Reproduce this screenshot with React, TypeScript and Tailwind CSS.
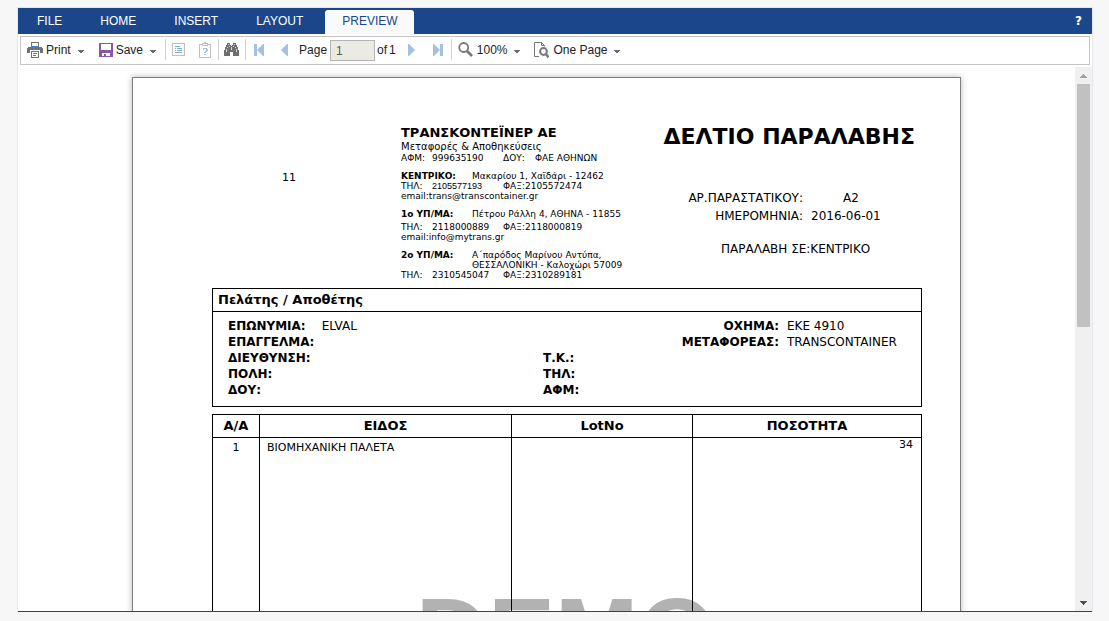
import React from 'react';

const tabs = ['FILE', 'HOME', 'INSERT', 'LAYOUT'];

const Caret = () => (
  <svg width="6" height="4" viewBox="0 0 6 4" shapeRendering="crispEdges" className="mt-1">
    <path d="M0 0h6v1h-1v1h-1v1h-2v-1h-1v-1h-1z" fill="#6d6d6d" />
  </svg>
);

const Separator = ({ className }: { className: string }) => <div className={`h-[21px] w-px bg-[#d0d0d0] ${className}`} />;

const PrintIcon = () => (
  <svg width="16" height="16" viewBox="0 0 16 16" shapeRendering="crispEdges">
    <path d="M4 0h8v5h-8z" fill="#727272" />
    <path d="M5 1h6v3h-6z" fill="#fff" />
    <path d="M1 5h14v1h1v5h-16v-5h1z" fill="#727272" />
    <path d="M4 4h8v1h-8z" fill="#4a7ebb" />
    <path d="M3 8h10v3h-10z" fill="#fff" />
    <path d="M4 9h8v7h-8z" fill="#727272" />
    <path d="M5 10h6v5h-6z" fill="#fff" />
    <path d="M6 11h4v1h-4zM6 13h3v1h-3z" fill="#4a7ebb" />
  </svg>
);

const SaveIcon = () => (
  <svg width="14" height="14" viewBox="0 0 14 14" shapeRendering="crispEdges">
    <path d="M0 0h14v14h-14z" fill="#8a56a8" />
    <path d="M2 1h10v6h-10zM3 10h8v3h-4v-2h-2v2h-2z" fill="#fff" />
  </svg>
);

const ParametersIcon = () => (
  <svg width="13" height="13" viewBox="0 0 13 13" shapeRendering="crispEdges">
    <path d="M.5 .5h12v12h-12z" fill="none" stroke="#c0c0c0" />
    <path d="M3 3h5v1h-5zM3 5h1v1h-1zM5 5h5v1h-5zM5 7h5v1h-5zM3 7h1v1h-1zM3 9h7v1h-7z" fill="#7fabd8" />
  </svg>
);

const ClipboardIcon = () => (
  <svg width="12" height="16" viewBox="0 0 12 16" shapeRendering="crispEdges">
    <path d="M.5 2.5h11v13h-11z" fill="none" stroke="#c0c0c0" />
    <path d="M5 0h2v1h2v3h-6v-3h2z" fill="#c0c0c0" />
    <path d="M4 2h4v1h-4z" fill="#fff" />
    <path d="M4 6h4v1h1v2h-1v1h-1v1h-2v-1h1v-1h1v-2h-2v1h-1zM5 12h2v1h-2z" fill="#a4c2e0" />
  </svg>
);

const FindIcon = () => (
  <svg width="15" height="13" viewBox="0 0 15 13" shapeRendering="crispEdges">
    <path d="M3 0h3v2h1v1h1v-1h1v-2h3v2h1v2h1v3h1v6h-6v-4h-3v4h-6v-6h1v-3h1v-2h1z" fill="#6f6f6f" />
    <path d="M4 1h1v1h-1zM10 1h1v1h-1zM7 4h1v3h-1zM3 4h1v1h-1zM2 6h1v3h-1zM5 3h1v1h-1zM9 3h1v1h-1zM12 6h1v3h-1zM11 4h1v1h-1z" fill="#d4d4d4" />
  </svg>
);

const ArrowIcon = ({ bar, flip }: { bar?: boolean; flip?: boolean }) => (
  <svg width={bar ? 10 : 7} height="12" viewBox={bar ? '0 0 10 12' : '3 0 7 12'} className={flip ? '-scale-x-100' : ''}>
    {bar && <path d="M0 0h3v12h-3z" fill="#a4c2e0" />}
    <path d="M10 0v12h-1l-6-6l6-6z" fill="#a4c2e0" />
  </svg>
);

const ZoomIcon = () => (
  <svg width="15" height="15" viewBox="0 0 15 15" fill="none" stroke="#777">
    <circle cx="5.7" cy="5.5" r="4.5" strokeWidth="1.8" />
    <path d="M9 9l5 5" strokeWidth="2.6" />
  </svg>
);

const PageViewIcon = () => (
  <svg width="15" height="16" viewBox="0 0 15 16" fill="none" stroke="#777">
    <path d="M5 14.5H.5V.5h7l3 3v1M7.5 .5v3h3" />
    <circle cx="9.5" cy="9.5" r="3.4" strokeWidth="2" />
    <path d="M11.8 12l2.8 3.4" strokeWidth="2.4" />
  </svg>
);

const Ribbon = () => {
  return (
    <nav className="flex h-[26px] shrink-0 items-stretch bg-[#1b478a] text-xs text-white">
      {tabs.map((tab) => (
        <button key={tab} type="button" className="px-[19px]">
          {tab}
        </button>
      ))}
      <button type="button" className="mt-0.5 ml-[3px] rounded-t-[3px] bg-[#fafafa] pr-4 pb-0.5 pl-[17px] text-[#1b478a]">
        PREVIEW
      </button>
      <button type="button" aria-label="Help" className="mr-2.5 ml-auto font-['DejaVu_Sans'] text-xs font-bold">
        ?
      </button>
    </nav>
  );
};

const Toolbar = () => {
  return (
    <div className="mx-0.5 mt-0.5 flex h-[29px] shrink-0 items-center border border-[#c4c4c8] bg-white pb-0.5 pl-1.5 text-xs text-[#222]">
      <button type="button" className="flex items-center">
        <PrintIcon />
        <span className="mr-[7px] ml-[3px]">Print</span>
        <Caret />
      </button>
      <button type="button" className="ml-[15px] flex items-center">
        <SaveIcon />
        <span className="mr-[7px] ml-[3px]">Save</span>
        <Caret />
      </button>
      <Separator className="ml-[9px]" />
      <button type="button" aria-label="Parameters" className="ml-1.5">
        <ParametersIcon />
      </button>
      <button type="button" aria-label="Help on parameters" className="ml-3.5">
        <ClipboardIcon />
      </button>
      <Separator className="ml-[7px]" />
      <button type="button" aria-label="Find" className="ml-[5px]">
        <FindIcon />
      </button>
      <Separator className="ml-1.5" />
      <button type="button" aria-label="First page" className="ml-2">
        <ArrowIcon bar />
      </button>
      <button type="button" aria-label="Previous page" className="ml-[17px]">
        <ArrowIcon />
      </button>
      <label htmlFor="page" className="ml-[11px]">
        Page
      </label>
      <input
        id="page"
        type="text"
        defaultValue="1"
        className="mt-0.5 ml-[3px] h-[21px] w-[45px] border border-[#b4b4b4] bg-[#ebebe4] px-[5px] text-xs text-[#545454]"
      />
      <span className="ml-0.5 flex gap-0.5">
        <span>of</span>
        <span>1</span>
      </span>
      <button type="button" aria-label="Next page" className="ml-3">
        <ArrowIcon flip />
      </button>
      <button type="button" aria-label="Last page" className="ml-[18px]">
        <ArrowIcon bar flip />
      </button>
      <Separator className="ml-2" />
      <button type="button" className="ml-1.5 flex items-center">
        <ZoomIcon />
        <span className="mr-[7px] ml-1">100%</span>
        <Caret />
      </button>
      <button type="button" className="ml-3.5 flex items-center">
        <PageViewIcon />
        <span className="mr-1.5 ml-1">One Page</span>
        <Caret />
      </button>
    </div>
  );
};

const Phones = ({ tel, fax, className = '' }: { tel: string; fax: string; className?: string }) => (
  <p className="flex">
    <span className="w-[31px]">ΤΗΛ:</span>
    <span className={`w-[71px] ${className}`}>{tel}</span>
    <span>ΦΑΞ:{fax}</span>
  </p>
);

const Company = () => {
  return (
    <address className="w-[260px] text-[9px] leading-[10px] whitespace-nowrap not-italic">
      <h2 className="text-[13px] leading-4 font-bold">ΤΡΑΝΣΚΟΝΤΕΪΝΕΡ ΑΕ</h2>
      <p className="text-[10px] leading-3">Μεταφορές &amp; Αποθηκεύσεις</p>
      <p className="flex">
        <span className="w-[31px]">ΑΦΜ:</span>
        <span className="w-[71px]">999635190</span>
        <span className="w-8">ΔΟΥ:</span>
        <span>ΦΑΕ ΑΘΗΝΩΝ</span>
      </p>
      <p className="mt-2 flex">
        <b className="w-[71px]">ΚΕΝΤΡΙΚΟ:</b>
        <span>Μακαρίου 1, Χαϊδάρι - 12462</span>
      </p>
      <Phones tel="2105577193" fax="2105572474" className="font-['Liberation_Sans']" />
      <p>email:trans@transcontainer.gr</p>
      <p className="mt-2 flex">
        <b className="w-[71px]">1ο ΥΠ/ΜΑ:</b>
        <span>Πέτρου Ράλλη 4, ΑΘΗΝΑ - 11855</span>
      </p>
      <div className="mt-[3px]">
        <Phones tel="2118000889" fax="2118000819" />
      </div>
      <p>email:info@mytrans.gr</p>
      <p className="mt-2 flex">
        <b className="w-[71px]">2ο ΥΠ/ΜΑ:</b>
        <span>
          Α΄παρόδος Μαρίνου Αντύπα,
          <br />
          ΘΕΣΣΑΛΟΝΙΚΗ - Καλοχώρι 57009
        </span>
      </p>
      <Phones tel="2310545047" fax="2310289181" />
    </address>
  );
};

const Customer = () => {
  return (
    <section className="border border-black">
      <h2 className="border-b border-black pl-[5px] text-[13px] leading-[22px] font-bold">Πελάτης / Αποθέτης</h2>
      <div className="flex h-[94px] pt-1.5 pl-[15px] text-xs leading-4">
        <dl className="w-[315px]">
          <div className="flex gap-4">
            <dt className="font-bold">ΕΠΩΝΥΜΙΑ:</dt>
            <dd>ELVAL</dd>
          </div>
          <dt className="font-bold">ΕΠΑΓΓΕΛΜΑ:</dt>
          <dt className="font-bold">ΔΙΕΥΘΥΝΣΗ:</dt>
          <dt className="font-bold">ΠΟΛΗ:</dt>
          <dt className="font-bold">ΔΟΥ:</dt>
        </dl>
        <dl className="w-[100px] pt-8 font-bold">
          <dt>Τ.Κ.:</dt>
          <dt>ΤΗΛ:</dt>
          <dt>ΑΦΜ:</dt>
        </dl>
        <dl className="grid flex-1 grid-cols-[136px_1fr] content-start gap-x-2">
          <dt className="text-right font-bold">ΟΧΗΜΑ:</dt>
          <dd>ΕΚΕ 4910</dd>
          <dt className="text-right font-bold">ΜΕΤΑΦΟΡΕΑΣ:</dt>
          <dd>TRANSCONTAINER</dd>
        </dl>
      </div>
    </section>
  );
};

const Items = () => {
  return (
    <table className="relative mt-[7px] h-[640px] w-full table-fixed border-collapse text-[11px]">
      <thead>
        <tr className="h-[23px] text-[13px] leading-4 [&>th]:border [&>th]:border-black [&>th]:p-0">
          <th className="w-[47px]">Α/Α</th>
          <th className="w-[252px]">ΕΙΔΟΣ</th>
          <th className="w-[181px]">LotNo</th>
          <th>ΠΟΣΟΤΗΤΑ</th>
        </tr>
      </thead>
      <tbody>
        <tr className="align-top leading-[14px] [&>td]:border [&>td]:border-black">
          <td className="pt-[3px] text-center">1</td>
          <td className="pt-[3px] pl-[7px]">ΒΙΟΜΗΧΑΝΙΚΗ ΠΑΛΕΤΑ</td>
          <td />
          <td className="pr-2 text-right">34</td>
        </tr>
      </tbody>
    </table>
  );
};

const Report = () => {
  return (
    <article className="relative mx-auto mt-2.5 h-[1170px] w-[829px] shrink-0 border border-[#7f7f7f] bg-white pr-[38px] pl-[79px] font-['DejaVu_Sans',sans-serif] text-black shadow-[0_0_6px_rgba(0,0,0,0.3)]">
      <p className="pointer-events-none absolute inset-x-0 top-[498px] pl-[39px] text-center font-['Liberation_Sans'] text-[100px] leading-[114px] font-bold text-[#b2b2b2]">
        DEMO
      </p>
      <header className="flex h-[210px] pt-[47px]">
        <p className="w-[154px] pt-[45px] text-center text-[11px] leading-4">11</p>
        <div className="ml-[35px]">
          <Company />
        </div>
        <div className="flex-1 pr-[7px] whitespace-nowrap">
          <h1 className="text-right text-[22px] leading-6 font-bold">ΔΕΛΤΙΟ ΠΑΡΑΛΑΒΗΣ</h1>
          <dl className="mt-10 grid grid-cols-[1fr_80px] gap-x-2 pr-6 text-xs leading-[18px]">
            <dt className="text-right">ΑΡ.ΠΑΡΑΣΤΑΤΙΚΟΥ:</dt>
            <dd className="text-center">Α2</dd>
            <dt className="text-right">ΗΜΕΡΟΜΗΝΙΑ:</dt>
            <dd>2016-06-01</dd>
          </dl>
          <p className="mt-[15px] pl-[60px] text-xs leading-[18px]">ΠΑΡΑΛΑΒΗ ΣΕ:ΚΕΝΤΡΙΚΟ</p>
        </div>
      </header>
      <Customer />
      <Items />
    </article>
  );
};

const Scrollbar = () => {
  return (
    <div className="flex w-[17px] shrink-0 flex-col items-center bg-[#f0f0f0]">
      <button type="button" aria-label="Scroll up" className="flex h-[17px] w-full items-center justify-center">
        <svg width="7" height="4" viewBox="0 0 7 4" shapeRendering="crispEdges">
          <path d="M3 0h1v1h1v1h1v1h1v1h-7v-1h1v-1h1v-1h1z" fill="#a0a0a0" />
        </svg>
      </button>
      <div className="h-[243px] w-[13px] bg-[#c1c1c1]" />
      <button type="button" aria-label="Scroll down" className="mt-auto flex h-[17px] w-full items-center justify-center">
        <svg width="7" height="4" viewBox="0 0 7 4" shapeRendering="crispEdges">
          <path d="M0 0h7v1h-1v1h-1v1h-1v1h-1v-1h-1v-1h-1v-1h-1z" fill="#505050" />
        </svg>
      </button>
    </div>
  );
};

const App = () => {
  return (
    <main className="h-screen bg-[#f7f7f7] pt-[7px] pr-4 pb-[9px] pl-[17px] font-['Liberation_Sans',Arial,sans-serif]">
      <div className="flex h-full flex-col border border-b-0 border-[#e6e6ee] bg-white">
        <Ribbon />
        <Toolbar />
        <div className="mt-0.5 flex min-h-0 flex-1 border-b border-[#1b478a]">
          <div className="flex-1 overflow-y-auto [scrollbar-width:none]">
            <Report />
          </div>
          <Scrollbar />
        </div>
      </div>
    </main>
  );
};

export default App;
